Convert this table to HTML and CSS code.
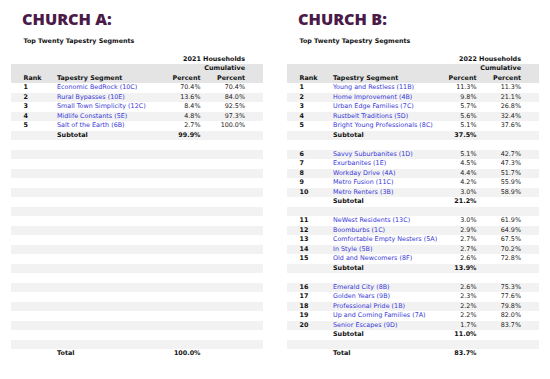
FILE: index.html
```html
<!DOCTYPE html>
<html>
<head>
<meta charset="utf-8">
<link rel="stylesheet" href="styles.css">
</head>
<body>
<div class="page">
  <section class="panel">
    <h1 class="title">CHURCH A:</h1>
    <div class="subtitle">Top Twenty Tapestry Segments</div>
    <div class="table">
      <div class="row head-top"><span class="span-all">2021 Households</span></div>
      <div class="row head"><span></span><span></span><span></span><span class="cum">Cumulative</span></div>
      <div class="row head"><span class="rank">Rank</span><span class="seg">Tapestry Segment</span><span class="pct">Percent</span><span class="cum">Percent</span></div>
      <div class="row"><span class="rank">1</span><span class="seg link">Economic BedRock (10C)</span><span class="pct">70.4%</span><span class="cum">70.4%</span></div>
      <div class="row"><span class="rank">2</span><span class="seg link">Rural Bypasses (10E)</span><span class="pct">13.6%</span><span class="cum">84.0%</span></div>
      <div class="row"><span class="rank">3</span><span class="seg link">Small Town Simplicity (12C)</span><span class="pct">8.4%</span><span class="cum">92.5%</span></div>
      <div class="row"><span class="rank">4</span><span class="seg link">Midlife Constants (5E)</span><span class="pct">4.8%</span><span class="cum">97.3%</span></div>
      <div class="row"><span class="rank">5</span><span class="seg link">Salt of the Earth (6B)</span><span class="pct">2.7%</span><span class="cum">100.0%</span></div>
      <div class="row sub"><span></span><span class="seg">Subtotal</span><span class="pct">99.9%</span><span></span></div>
      <div class="row"></div><div class="row"></div><div class="row"></div><div class="row"></div>
      <div class="row"></div><div class="row"></div><div class="row"></div><div class="row"></div>
      <div class="row"></div><div class="row"></div><div class="row"></div><div class="row"></div>
      <div class="row"></div><div class="row"></div><div class="row"></div><div class="row"></div>
      <div class="row"></div><div class="row"></div><div class="row"></div><div class="row"></div>
      <div class="row"></div><div class="row"></div>
      <div class="row sub"><span></span><span class="seg">Total</span><span class="pct">100.0%</span><span></span></div>
    </div>
  </section>
  <section class="panel">
    <h1 class="title">CHURCH B:</h1>
    <div class="subtitle">Top Twenty Tapestry Segments</div>
    <div class="table">
      <div class="row head-top"><span class="span-all">2022 Households</span></div>
      <div class="row head"><span></span><span></span><span></span><span class="cum">Cumulative</span></div>
      <div class="row head"><span class="rank">Rank</span><span class="seg">Tapestry Segment</span><span class="pct">Percent</span><span class="cum">Percent</span></div>
      <div class="row"><span class="rank">1</span><span class="seg link">Young and Restless (11B)</span><span class="pct">11.3%</span><span class="cum">11.3%</span></div>
      <div class="row"><span class="rank">2</span><span class="seg link">Home Improvement (4B)</span><span class="pct">9.8%</span><span class="cum">21.1%</span></div>
      <div class="row"><span class="rank">3</span><span class="seg link">Urban Edge Families (7C)</span><span class="pct">5.7%</span><span class="cum">26.8%</span></div>
      <div class="row"><span class="rank">4</span><span class="seg link">Rustbelt Traditions (5D)</span><span class="pct">5.6%</span><span class="cum">32.4%</span></div>
      <div class="row"><span class="rank">5</span><span class="seg link">Bright Young Professionals (8C)</span><span class="pct">5.1%</span><span class="cum">37.6%</span></div>
      <div class="row sub"><span></span><span class="seg">Subtotal</span><span class="pct">37.5%</span><span></span></div>
      <div class="row"></div>
      <div class="row"><span class="rank">6</span><span class="seg link">Savvy Suburbanites (1D)</span><span class="pct">5.1%</span><span class="cum">42.7%</span></div>
      <div class="row"><span class="rank">7</span><span class="seg link">Exurbanites (1E)</span><span class="pct">4.5%</span><span class="cum">47.3%</span></div>
      <div class="row"><span class="rank">8</span><span class="seg link">Workday Drive (4A)</span><span class="pct">4.4%</span><span class="cum">51.7%</span></div>
      <div class="row"><span class="rank">9</span><span class="seg link">Metro Fusion (11C)</span><span class="pct">4.2%</span><span class="cum">55.9%</span></div>
      <div class="row"><span class="rank">10</span><span class="seg link">Metro Renters (3B)</span><span class="pct">3.0%</span><span class="cum">58.9%</span></div>
      <div class="row sub"><span></span><span class="seg">Subtotal</span><span class="pct">21.2%</span><span></span></div>
      <div class="row"></div>
      <div class="row"><span class="rank">11</span><span class="seg link">NeWest Residents (13C)</span><span class="pct">3.0%</span><span class="cum">61.9%</span></div>
      <div class="row"><span class="rank">12</span><span class="seg link">Boomburbs (1C)</span><span class="pct">2.9%</span><span class="cum">64.9%</span></div>
      <div class="row"><span class="rank">13</span><span class="seg link">Comfortable Empty Nesters (5A)</span><span class="pct">2.7%</span><span class="cum">67.5%</span></div>
      <div class="row"><span class="rank">14</span><span class="seg link">In Style (5B)</span><span class="pct">2.7%</span><span class="cum">70.2%</span></div>
      <div class="row"><span class="rank">15</span><span class="seg link">Old and Newcomers (8F)</span><span class="pct">2.6%</span><span class="cum">72.8%</span></div>
      <div class="row sub"><span></span><span class="seg">Subtotal</span><span class="pct">13.9%</span><span></span></div>
      <div class="row"></div>
      <div class="row"><span class="rank">16</span><span class="seg link">Emerald City (8B)</span><span class="pct">2.6%</span><span class="cum">75.3%</span></div>
      <div class="row"><span class="rank">17</span><span class="seg link">Golden Years (9B)</span><span class="pct">2.3%</span><span class="cum">77.6%</span></div>
      <div class="row"><span class="rank">18</span><span class="seg link">Professional Pride (1B)</span><span class="pct">2.2%</span><span class="cum">79.8%</span></div>
      <div class="row"><span class="rank">19</span><span class="seg link">Up and Coming Families (7A)</span><span class="pct">2.2%</span><span class="cum">82.0%</span></div>
      <div class="row"><span class="rank">20</span><span class="seg link">Senior Escapes (9D)</span><span class="pct">1.7%</span><span class="cum">83.7%</span></div>
      <div class="row sub"><span></span><span class="seg">Subtotal</span><span class="pct">11.0%</span><span></span></div>
      <div class="row"></div>
      <div class="row sub"><span></span><span class="seg">Total</span><span class="pct">83.7%</span><span></span></div>
    </div>
  </section>
</div>
</body>
</html>
```
FILE: styles.css
```css
html, body {
  margin: 0;
  padding: 0;
  background: #ffffff;
}

.page {
  display: flex;
  gap: 24px;
  padding-left: 11px;
  width: 550px;
  height: 379px;
  box-sizing: border-box;
  overflow: hidden;
}

.panel {
  width: 252px;
  flex: none;
  display: flex;
  flex-direction: column;
}

.title {
  margin: 8.6px 0 0 11px;
  font-family: "Open Sans", "DejaVu Sans", sans-serif;
  font-weight: 800;
  font-size: 16.2px;
  line-height: 20px;
  color: #4a1a48;
  letter-spacing: 0;
}

.subtitle {
  margin: 7.1px 0 0 12.5px;
  font-family: "DejaVu Sans", Verdana, sans-serif;
  font-weight: 700;
  font-size: 6.35px;
  line-height: 9.5px;
  height: 9.5px;
  color: #111111;
}

.table {
  margin-top: 9.55px;
  font-family: "DejaVu Sans", Verdana, sans-serif;
  font-size: 6.4px;
  color: #222222;
}

.row {
  display: grid;
  grid-template-columns: 46px 104px 39.5px 44.5px 18px;
  height: 9.5px;
  line-height: 9.5px;
  white-space: nowrap;
}

.table .row:nth-child(2n+5) {
  background: #f2f2f2;
}

.row.head {
  background: #e4e4e4;
  font-weight: 700;
  color: #111111;
}

.row.head-top {
  font-weight: 700;
  color: #111111;
}

.span-all {
  grid-column: 1 / 5;
  text-align: right;
}

.rank {
  padding-left: 12.5px;
  font-weight: 700;
  color: #111111;
}

.seg {
  overflow: visible;
}

.pct, .cum {
  text-align: right;
}

.link {
  color: #3838d8;
}

.row.sub {
  font-weight: 700;
  color: #111111;
}
```
